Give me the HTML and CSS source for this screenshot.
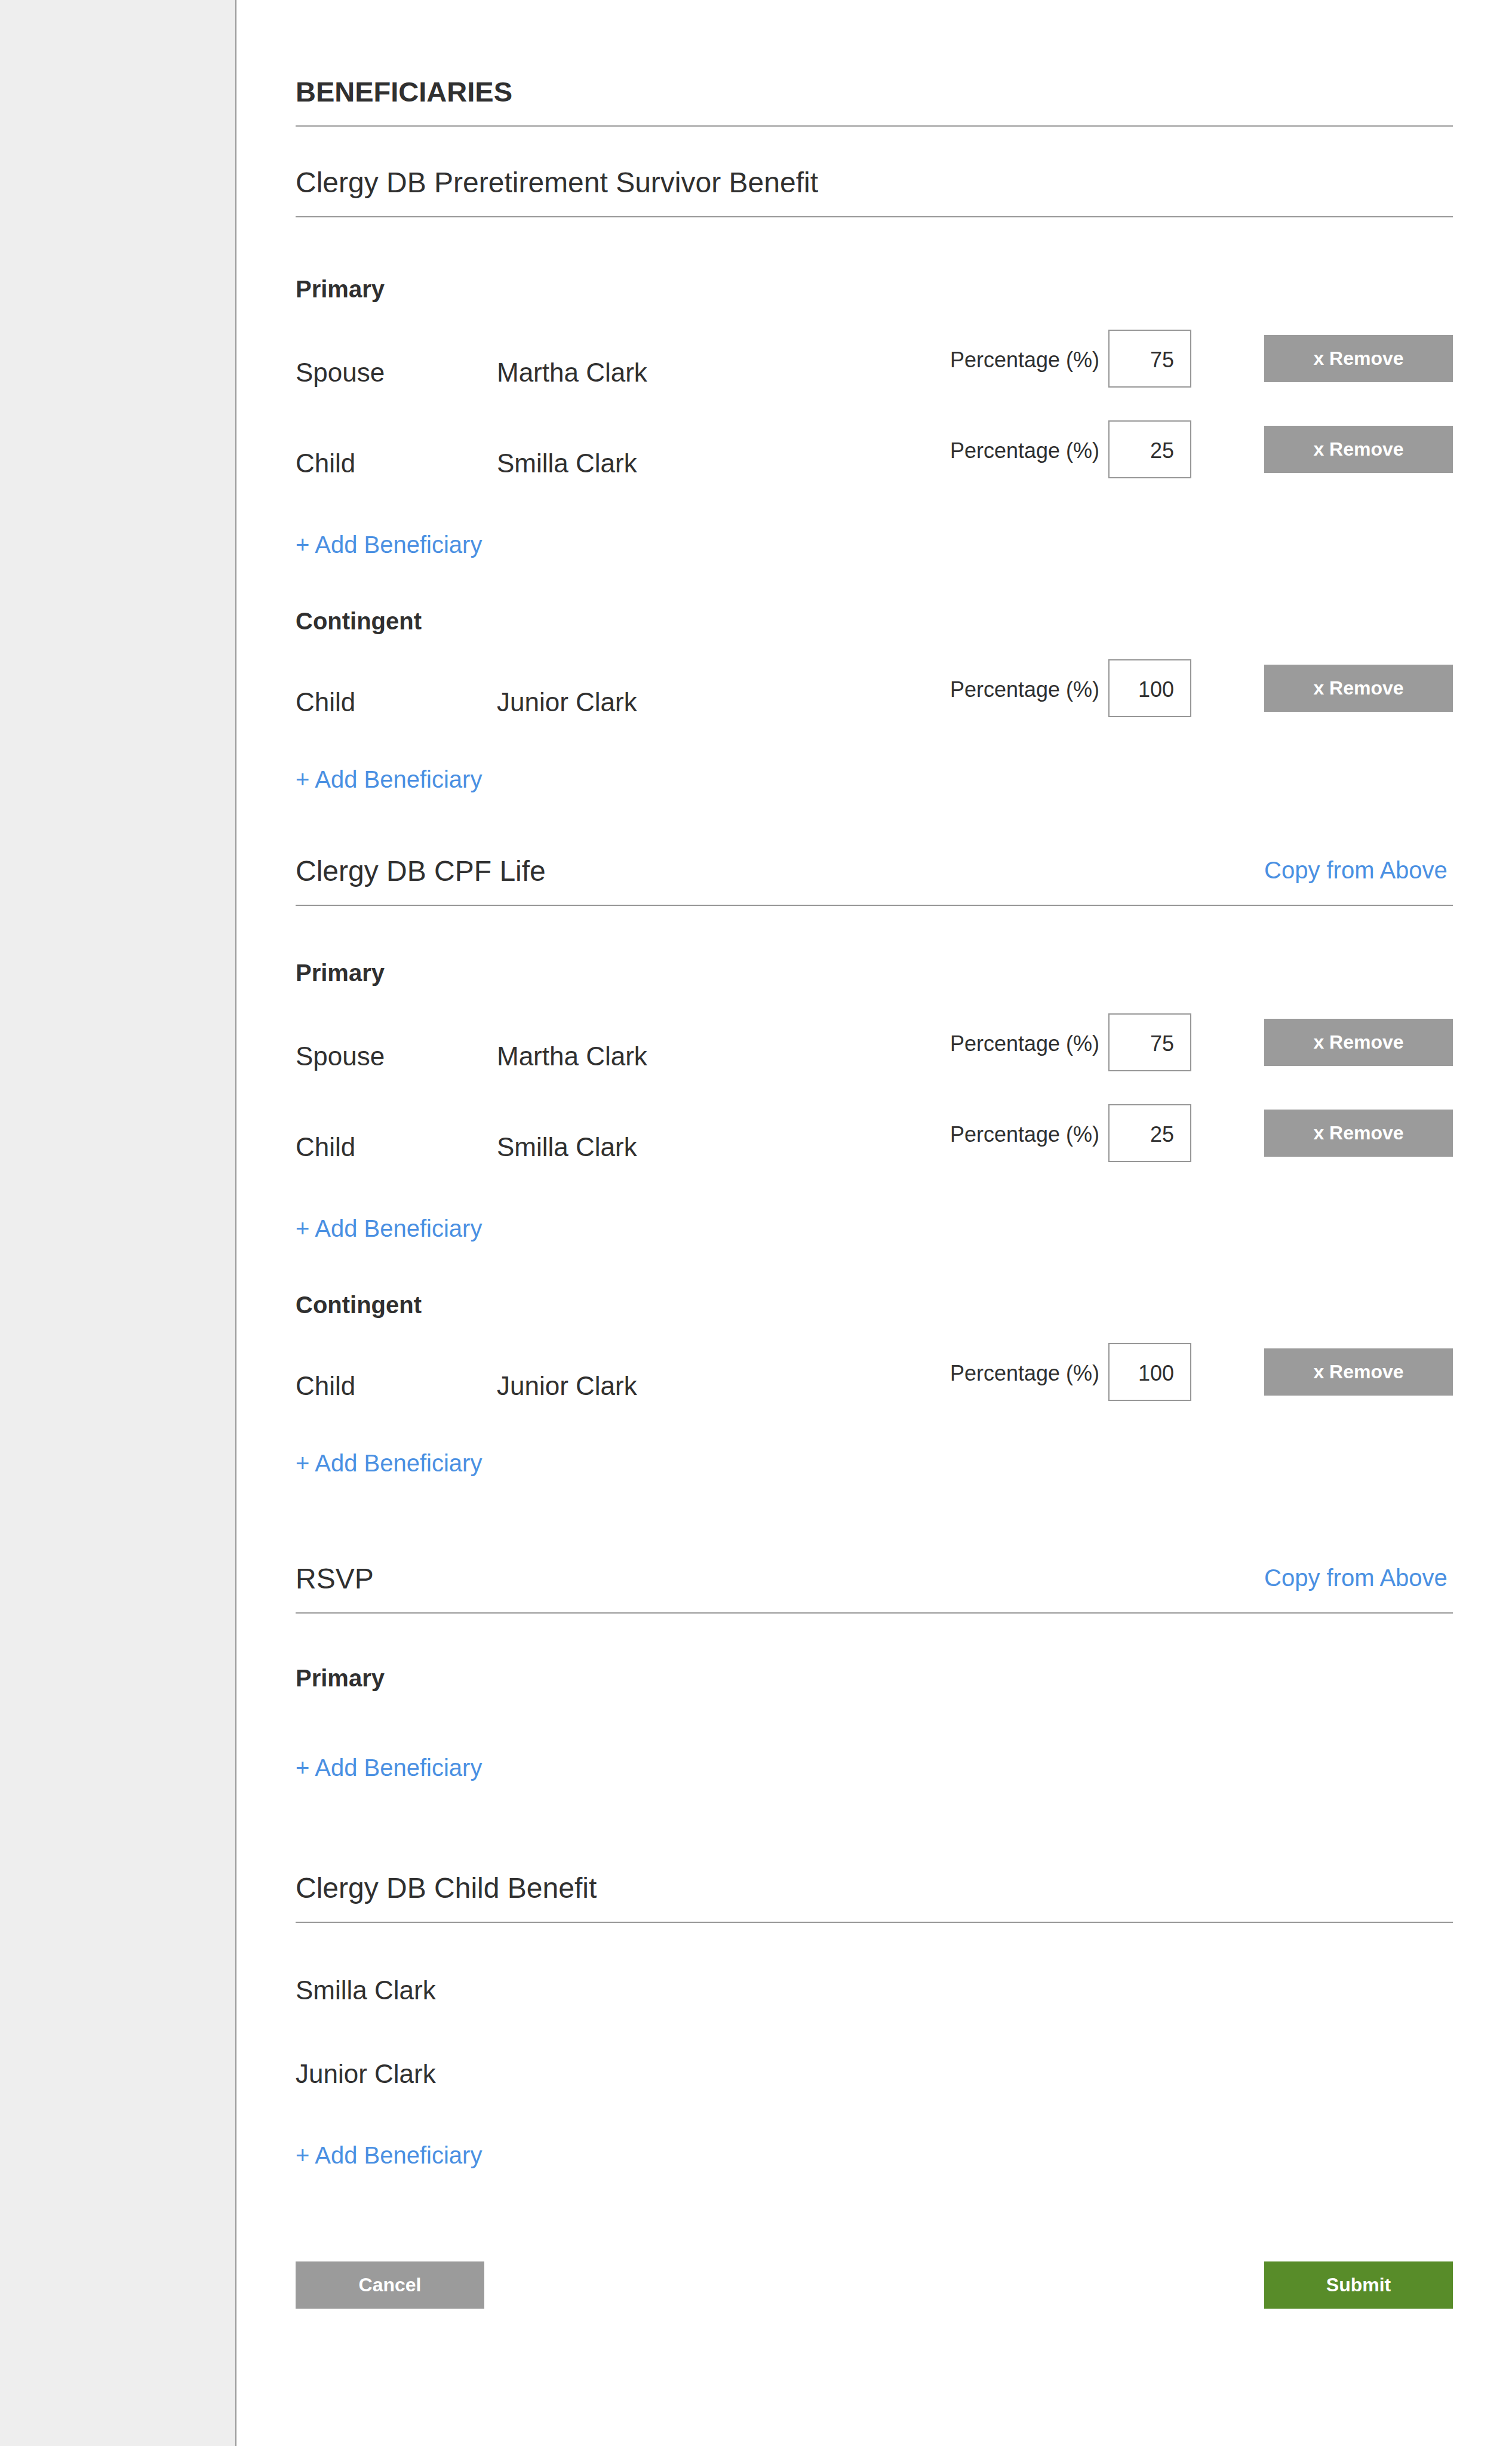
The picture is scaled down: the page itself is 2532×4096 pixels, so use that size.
FILE: index.html
```html
<!DOCTYPE html>
<html lang="en">
<head>
<meta charset="utf-8">
<meta name="viewport" content="width=device-width, initial-scale=1">
<title>Beneficiaries</title>
<link rel="stylesheet" href="styles.css">
</head>
<body>
<div class="page">
  <aside class="sidebar"></aside>
  <main class="main">
    <form class="form">
      <h1 class="page-title">BENEFICIARIES</h1>

      <section class="plan plan-first">
        <header class="plan-header">
          <h2 class="plan-title">Clergy DB Preretirement Survivor Benefit</h2>
        </header>
        <div class="group">
          <h3 class="group-title">Primary</h3>
          <ul class="rows">
            <li class="row">
              <span class="cell">Spouse</span>
              <span class="cell">Martha Clark</span>
              <span class="field"><label class="field-label" for="p1">Percentage (%)</label><input class="field-input" id="p1" type="text" inputmode="numeric" value="75"></span>
              <button class="button" type="button">x Remove</button>
            </li>
            <li class="row">
              <span class="cell">Child</span>
              <span class="cell">Smilla Clark</span>
              <span class="field"><label class="field-label" for="p2">Percentage (%)</label><input class="field-input" id="p2" type="text" inputmode="numeric" value="25"></span>
              <button class="button" type="button">x Remove</button>
            </li>
          </ul>
          <a class="link add" href="#">+ Add Beneficiary</a>
        </div>
        <div class="group group-contingent">
          <h3 class="group-title">Contingent</h3>
          <ul class="rows">
            <li class="row">
              <span class="cell">Child</span>
              <span class="cell">Junior Clark</span>
              <span class="field"><label class="field-label" for="p3">Percentage (%)</label><input class="field-input" id="p3" type="text" inputmode="numeric" value="100"></span>
              <button class="button" type="button">x Remove</button>
            </li>
          </ul>
          <a class="link add" href="#">+ Add Beneficiary</a>
        </div>
      </section>

      <section class="plan plan-life">
        <header class="plan-header">
          <h2 class="plan-title">Clergy DB CPF Life</h2>
          <a class="link copy" href="#">Copy from Above</a>
        </header>
        <div class="group">
          <h3 class="group-title">Primary</h3>
          <ul class="rows">
            <li class="row">
              <span class="cell">Spouse</span>
              <span class="cell">Martha Clark</span>
              <span class="field"><label class="field-label" for="p4">Percentage (%)</label><input class="field-input" id="p4" type="text" inputmode="numeric" value="75"></span>
              <button class="button" type="button">x Remove</button>
            </li>
            <li class="row">
              <span class="cell">Child</span>
              <span class="cell">Smilla Clark</span>
              <span class="field"><label class="field-label" for="p5">Percentage (%)</label><input class="field-input" id="p5" type="text" inputmode="numeric" value="25"></span>
              <button class="button" type="button">x Remove</button>
            </li>
          </ul>
          <a class="link add" href="#">+ Add Beneficiary</a>
        </div>
        <div class="group group-contingent">
          <h3 class="group-title">Contingent</h3>
          <ul class="rows">
            <li class="row">
              <span class="cell">Child</span>
              <span class="cell">Junior Clark</span>
              <span class="field"><label class="field-label" for="p6">Percentage (%)</label><input class="field-input" id="p6" type="text" inputmode="numeric" value="100"></span>
              <button class="button" type="button">x Remove</button>
            </li>
          </ul>
          <a class="link add" href="#">+ Add Beneficiary</a>
        </div>
      </section>

      <section class="plan plan-rsvp">
        <header class="plan-header">
          <h2 class="plan-title">RSVP</h2>
          <a class="link copy" href="#">Copy from Above</a>
        </header>
        <div class="group group-empty">
          <h3 class="group-title">Primary</h3>
          <a class="link add" href="#">+ Add Beneficiary</a>
        </div>
      </section>

      <section class="plan plan-child">
        <header class="plan-header">
          <h2 class="plan-title">Clergy DB Child Benefit</h2>
        </header>
        <div class="group">
          <ul class="names">
            <li class="cell">Smilla Clark</li>
            <li class="cell">Junior Clark</li>
          </ul>
          <a class="link add" href="#">+ Add Beneficiary</a>
        </div>
      </section>

      <footer class="actions">
        <button class="button" type="button">Cancel</button>
        <button class="button button-submit" type="submit">Submit</button>
      </footer>
    </form>
  </main>
</div>
</body>
</html>
```
FILE: styles.css
```css
:root {
  --text: #303030;
  --line: #979797;
  --grey: #9b9b9b;
  --blue: #4a90e2;
  --green: #588c29;
  --action-width: 316px;
}

* {
  box-sizing: border-box;
}

body {
  margin: 0;
  background: #fff;
  color: var(--text);
  font-family: "Liberation Sans", Arial, sans-serif;
}

h1, h2, h3, ul {
  margin: 0;
  padding: 0;
}

ul {
  list-style: none;
}

.page {
  display: flex;
  min-height: 100vh;
}

.sidebar {
  flex: 0 0 396px;
  background: #eee;
  border-right: 2px solid var(--line);
}

.main {
  flex: 1;
  min-width: 0;
  padding: 126px 99px;
}

.page-title,
.plan-header {
  padding-bottom: 28px;
  border-bottom: 2px solid var(--line);
}

.page-title {
  font-size: 47px;
  line-height: 56px;
  font-weight: bold;
}

/* Plans */

.plan-first { margin-top: 66px; }
.plan-life { margin-top: 102px; }
.plan-rsvp { margin-top: 142px; }
.plan-child { margin-top: 150px; }

.plan-header {
  display: flex;
  align-items: flex-start;
  justify-content: space-between;
}

.plan-title {
  font-size: 48px;
  line-height: 56px;
  font-weight: normal;
}

.link {
  color: var(--blue);
  font-size: 40px;
  line-height: 48px;
  text-decoration: none;
}

.copy {
  width: var(--action-width);
  line-height: 52px;
}

/* Groups of beneficiaries */

.group {
  display: flex;
  flex-direction: column;
  align-items: stretch;
  margin-top: 88px;
}

.plan-first .group { margin-top: 96px; }
.plan-rsvp .group { margin-top: 84px; }

.group-title {
  font-size: 40px;
  line-height: 48px;
  font-weight: bold;
}

.add {
  align-self: flex-start;
  margin-top: 87px;
}

.rows {
  display: flex;
  flex-direction: column;
  gap: 55px;
  margin-top: 44px;
}

.plan .group-contingent { margin-top: 80px; }
.group-contingent .rows { margin-top: 40px; }
.group-contingent .add { margin-top: 80px; }
.group-empty .add { margin-top: 102px; }

.row {
  display: grid;
  grid-template-columns: 337px 1fr auto var(--action-width);
  align-items: center;
}

.cell {
  align-self: end;
  font-size: 44px;
  line-height: 50px;
}

.field {
  display: flex;
  align-items: center;
  gap: 15px;
  margin-right: 122px;
}

.field-label {
  padding-top: 4px;
  font-size: 36px;
  line-height: 44px;
}

.field-input {
  width: 139px;
  height: 97px;
  padding: 4px 27px 0 10px;
  border: 2px solid var(--line);
  border-radius: 0;
  background: #fff;
  color: var(--text);
  font: 36px "Liberation Sans", Arial, sans-serif;
  text-align: right;
}

.button {
  width: var(--action-width);
  height: 79px;
  padding: 0;
  border: 0;
  border-radius: 0;
  background: var(--grey);
  color: #fff;
  font: bold 32px "Liberation Sans", Arial, sans-serif;
  cursor: pointer;
}

.button-submit {
  background: var(--green);
}

.names {
  display: flex;
  flex-direction: column;
  gap: 90px;
}

.names .cell {
  align-self: flex-start;
}

.actions {
  display: flex;
  justify-content: space-between;
  margin-top: 154px;
}
```
